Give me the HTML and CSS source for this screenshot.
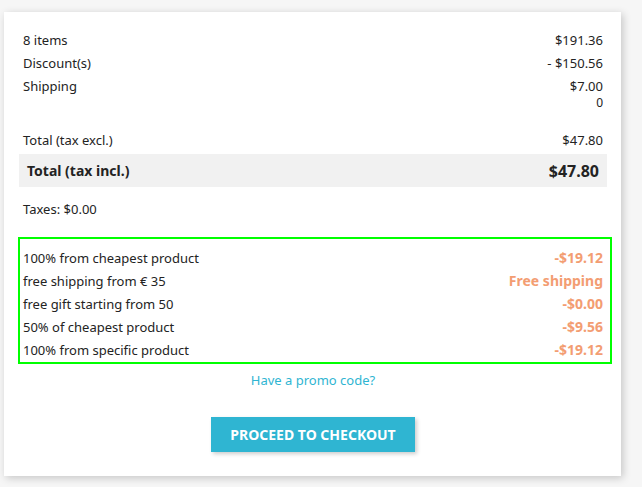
FILE: index.html
```html
<!DOCTYPE html>
<html lang="en">
<head>
<meta charset="utf-8">
<title>Cart summary</title>
<link rel="stylesheet" href="styles.css">
</head>
<body>
<div class="card">
  <div class="lines">
    <div class="line"><span>8 items</span><span class="value">$191.36</span></div>
    <div class="line"><span>Discount(s)</span><span class="value">- $150.56</span></div>
    <div class="line"><span>Shipping</span><span class="value stack"><span>$7.00</span><span class="sub">0</span></span></div>
  </div>
  <div class="totals">
    <div class="line"><span>Total (tax excl.)</span><span class="value">$47.80</span></div>
    <div class="line grand"><span class="label">Total (tax incl.)</span><span class="value">$47.80</span></div>
    <div class="line taxes"><span>Taxes: $0.00</span></div>
  </div>
  <div class="rules">
    <div class="line"><span>100% from cheapest product</span><span class="disc">-$19.12</span></div>
    <div class="line"><span>free shipping from € 35</span><span class="disc">Free shipping</span></div>
    <div class="line"><span>free gift starting from 50</span><span class="disc">-$0.00</span></div>
    <div class="line"><span>50% of cheapest product</span><span class="disc">-$9.56</span></div>
    <div class="line"><span>100% from specific product</span><span class="disc">-$19.12</span></div>
  </div>
  <div class="promo"><a href="#">Have a promo code?</a></div>
  <div class="actions"><a class="btn" href="#">Proceed to checkout</a></div>
</div>
</body>
</html>
```

FILE: styles.css
```css
html, body {
  margin: 0;
  padding: 0;
}
body {
  background: #f6f6f6;
  font-family: "Noto Sans", sans-serif;
  font-size: 13px;
  color: #232323;
  padding: 12px 21px 10px 4px;
}
.card {
  background: #fff;
  box-shadow: 2px 2px 8px 0 rgba(0, 0, 0, 0.2);
  padding: 19px 18px 25px 19px;
  height: 420px;
  display: flex;
  flex-direction: column;
}
.line {
  display: flex;
  justify-content: space-between;
  align-items: flex-start;
  line-height: 18px;
  margin-bottom: 5px;
}
.value {
  text-align: right;
}
.stack {
  display: flex;
  flex-direction: column;
  align-items: flex-end;
}
.sub {
  font-size: 12px;
  line-height: 16px;
}
.totals {
  margin-top: 15px;
}
.grand {
  background: #f1f1f1;
  margin: 4px -4px 0;
  padding: 0 8px;
  height: 33px;
  align-items: center;
  font-weight: 700;
  font-size: 14px;
}
.grand .value {
  font-size: 16px;
}
.taxes {
  margin-top: 13px;
}
.rules {
  border: 2px solid #00ff00;
  margin: 14px -9px 0 -5px;
  padding: 10px 7px 0 3px;
}
.rules .line:last-child {
  margin-bottom: 3px;
}
.disc {
  color: #f39d72;
  font-weight: 700;
  font-size: 14px;
}
.promo {
  text-align: center;
  margin-top: 7px;
  line-height: 18px;
}
.promo a {
  color: #2fb5d2;
  text-decoration: none;
}
.actions {
  display: flex;
  justify-content: center;
  margin-top: 28px;
}
.btn {
  display: block;
  background: #2fb5d2;
  color: #fff;
  text-decoration: none;
  text-transform: uppercase;
  font-weight: 700;
  font-size: 14px;
  line-height: 35px;
  height: 35px;
  padding: 0 19px;
  box-shadow: 2px 2px 4px 0 rgba(0, 0, 0, 0.2);
}
```
